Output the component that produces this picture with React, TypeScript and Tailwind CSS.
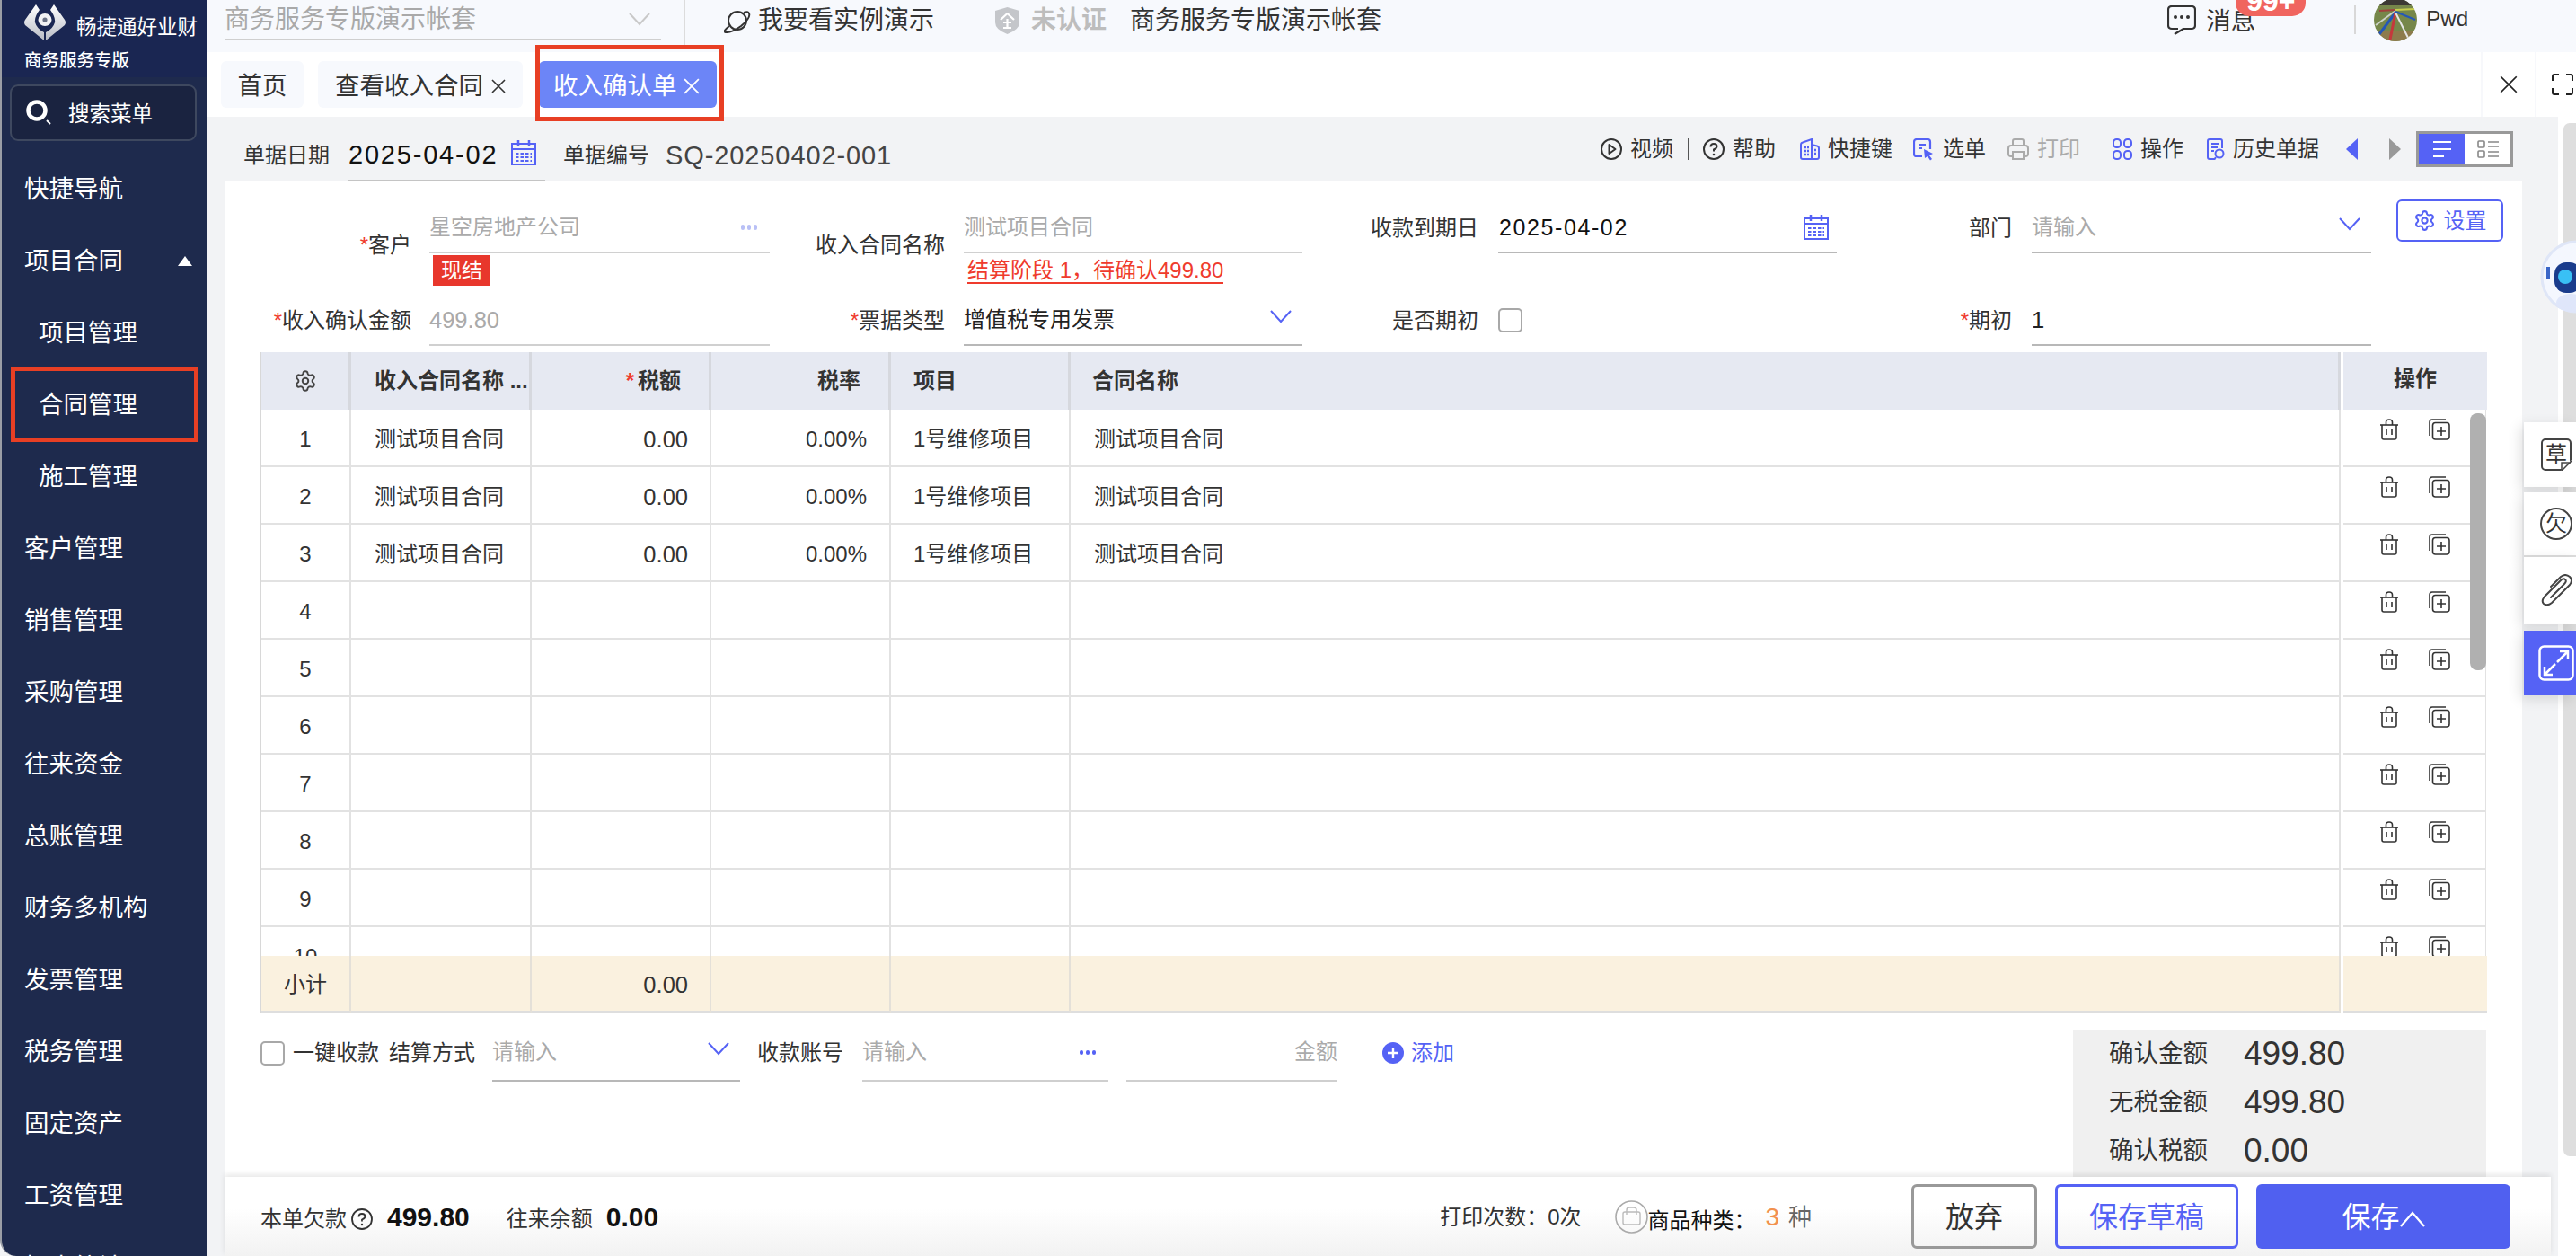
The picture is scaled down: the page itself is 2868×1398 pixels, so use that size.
import React from "react";
import { Settings } from "lucide-react";

const BLUE = "#5562f5";

function Chevron({ color = BLUE, className = "" }: { color?: string; className?: string }) {
  return (
    <svg width="24" height="15" viewBox="0 0 24 15" className={className} fill="none">
      <path d="M1 1 L12 13 L23 1" stroke={color} strokeWidth="2" />
    </svg>
  );
}

function Cross({ size = 16, color = "#333", sw = 1.6 }: { size?: number; color?: string; sw?: number }) {
  return (
    <svg width={size} height={size} viewBox="0 0 16 16" fill="none" className="shrink-0">
      <path d="M1 1 L15 15 M15 1 L1 15" stroke={color} strokeWidth={sw} />
    </svg>
  );
}

function Calendar() {
  return (
    <svg width="28" height="28" viewBox="0 0 28 28" fill="none" className="shrink-0">
      <rect x="1" y="4" width="26" height="23" stroke={BLUE} strokeWidth="2" />
      <path d="M1 10 H27" stroke={BLUE} strokeWidth="2" />
      <path d="M8 0 V7 M20 0 V7" stroke={BLUE} strokeWidth="2.5" />
      <path d="M5 15 H23 M5 19 H23 M5 23 H23" stroke={BLUE} strokeWidth="2" strokeDasharray="3.5 2" />
    </svg>
  );
}

function Logo() {
  return (
    <svg width="46" height="40" viewBox="0 0 46 40" className="shrink-0">
      <defs>
        <linearGradient id="lg" x1="0" y1="0" x2="0" y2="1">
          <stop offset="0" stopColor="#ffffff" />
          <stop offset="1" stopColor="#b9bcc6" />
        </linearGradient>
      </defs>
      <path d="M13 0 L1 17 Q-1 20 1 23 L22 40 L22 31 Q14 27 12 20 Q11 14 17 6 Z" fill="url(#lg)" />
      <path d="M33 0 L45 17 Q47 20 45 23 L24 40 L24 31 Q32 27 34 20 Q35 14 29 6 Z" fill="url(#lg)" />
      <ellipse cx="23" cy="17" rx="7.5" ry="7" fill="#f2f2f4" />
      <circle cx="23" cy="17" r="2.6" fill="#6b7285" />
    </svg>
  );
}

function SearchIcon() {
  return (
    <svg width="30" height="30" viewBox="0 0 30 30" fill="none" className="shrink-0">
      <circle cx="12" cy="12" r="9.5" stroke="#fff" strokeWidth="4.5" />
      <path d="M23 23 L27 27" stroke="#fff" strokeWidth="2" />
    </svg>
  );
}

function Avatar() {
  return (
    <svg width="48" height="48" viewBox="0 0 48 48" className="shrink-0 -mt-[2px]">
      <defs>
        <clipPath id="av">
          <circle cx="24" cy="24" r="24" />
        </clipPath>
      </defs>
      <g clipPath="url(#av)">
        <rect width="48" height="48" fill="#76874a" />
        <rect width="48" height="8" fill="#3d3a34" />
        <rect y="36" width="48" height="12" fill="#8d7b4c" />
        <path d="M24 14 L2 30" stroke="#ccd2c8" strokeWidth="2" />
        <path d="M24 16 L6 40" stroke="#2457b8" strokeWidth="3" />
        <path d="M24 16 L18 46" stroke="#c5383c" strokeWidth="3" />
        <path d="M24 16 L38 44" stroke="#e6e6e6" strokeWidth="2" />
        <path d="M24 15 L46 24" stroke="#2457b8" strokeWidth="2" />
        <path d="M24 13 L46 12" stroke="#c8cf4c" strokeWidth="2" />
        <path d="M24 13 L6 14" stroke="#a2413d" strokeWidth="2" />
      </g>
    </svg>
  );
}

function Robot() {
  return (
    <svg width="40" height="82" viewBox="0 0 40 82">
      <circle cx="41" cy="41" r="39" fill="#f4f7fe" stroke="#dfe6f7" strokeWidth="3" />
      <ellipse cx="34" cy="70" rx="16" ry="10" fill="#dfe6fa" />
      <rect x="16" y="25" width="30" height="34" rx="13" fill="#1a3c8c" />
      <circle cx="28" cy="41" r="8" fill="#39c0f5" />
      <path d="M9 30 L9 44" stroke="#3a66c8" strokeWidth="4" />
    </svg>
  );
}

const ToolIcons: Record<string, React.ReactNode> = {
  play: (
    <svg width="24" height="24" viewBox="0 0 24 24" fill="none">
      <circle cx="12" cy="12" r="11" stroke="#333" strokeWidth="2" />
      <path d="M9.5 7 L16.5 12 L9.5 17 Z" stroke="#333" strokeWidth="2" strokeLinejoin="round" />
    </svg>
  ),
  help: (
    <svg width="24" height="24" viewBox="0 0 24 24" fill="none">
      <circle cx="12" cy="12" r="11" stroke="#333" strokeWidth="2" />
      <path d="M8.5 9.5 Q8.5 6 12 6 Q15.5 6 15.5 9 Q15.5 11 12 12.5 V14.5" stroke="#333" strokeWidth="2" />
      <circle cx="12" cy="18" r="1.3" fill="#333" />
    </svg>
  ),
  building: (
    <svg width="22" height="24" viewBox="0 0 22 24" fill="none">
      <path d="M1 7 Q1 5 3 4.5 L13 1 V23 H3 Q1 23 1 21 Z" stroke={BLUE} strokeWidth="2" />
      <path d="M13 7 L19 8.5 Q21 9 21 11 V21 Q21 23 19 23 H13" stroke={BLUE} strokeWidth="2" />
      <path d="M5 10 H10 M5 14 H10 M5 18 H10 M16 13 H18 M16 17 H18" stroke={BLUE} strokeWidth="2.5" strokeDasharray="2 1" />
    </svg>
  ),
  select: (
    <svg width="24" height="25" viewBox="0 0 24 25" fill="none">
      <path d="M10 20 H4 Q1 20 1 17 V4 Q1 1 4 1 H16 Q19 1 19 4 V12" stroke={BLUE} strokeWidth="2.2" />
      <path d="M6 7 H14 M6 11 H10" stroke={BLUE} strokeWidth="2.2" />
      <path d="M12 12 L22 17 L18 19 L21 23 L19 24.5 L16 20 L13 22 Z" fill={BLUE} />
    </svg>
  ),
  print: (
    <svg width="24" height="24" viewBox="0 0 24 24" fill="none">
      <path d="M6 8 V3 Q6 1 8 1 H16 Q18 1 18 3 V8" stroke="#aaa" strokeWidth="2" />
      <path d="M6 20 H4 Q1 20 1 17 V11 Q1 8 4 8 H20 Q23 8 23 11 V17 Q23 20 20 20 H18" stroke="#aaa" strokeWidth="2" />
      <rect x="6" y="15" width="12" height="8" stroke="#aaa" strokeWidth="2" />
    </svg>
  ),
  ops: (
    <svg width="22" height="24" viewBox="0 0 22 24" fill="none">
      <rect x="1" y="1" width="8" height="9" rx="3.5" stroke={BLUE} strokeWidth="2" />
      <rect x="13" y="1" width="8" height="9" rx="3.5" stroke={BLUE} strokeWidth="2" />
      <rect x="1" y="14" width="8" height="9" rx="3.5" stroke={BLUE} strokeWidth="2" />
      <rect x="13" y="14" width="8" height="9" rx="3.5" stroke={BLUE} strokeWidth="2" />
    </svg>
  ),
  history: (
    <svg width="20" height="24" viewBox="0 0 20 24" fill="none">
      <path d="M9 23 H3 Q1 23 1 21 V3 Q1 1 3 1 H15 Q17 1 17 3 V11" stroke={BLUE} strokeWidth="2" />
      <path d="M5 6 H14 M5 10 H12 M5 14 H8" stroke={BLUE} strokeWidth="2" />
      <circle cx="14" cy="17" r="4.5" stroke={BLUE} strokeWidth="2" />
      <path d="M10 21 L8 24" stroke={BLUE} strokeWidth="2" />
    </svg>
  ),
};

function Tool({ icon, label, gray, className = "" }: { icon: string; label: string; gray?: boolean; className?: string }) {
  return (
    <div className={`flex items-center gap-[9px] ${className}`}>
      {ToolIcons[icon]}
      <span className={`text-[24px] leading-[28px] ${gray ? "text-[#aaa]" : "text-[#333]"}`}>{label}</span>
    </div>
  );
}

function Trash() {
  return (
    <svg width="20" height="24" viewBox="0 0 20 24" fill="none" className="shrink-0">
      <path d="M0 7 H20" stroke="#333" strokeWidth="1.6" />
      <path d="M6.5 7 V4 Q6.5 1 10 1 Q13.5 1 13.5 4 V7" stroke="#333" strokeWidth="1.6" />
      <path d="M2 7 V21 Q2 23 4 23 H16 Q18 23 18 21 V7" stroke="#333" strokeWidth="1.6" />
      <path d="M7 12 V18 M13 12 V18" stroke="#333" strokeWidth="1.6" />
    </svg>
  );
}

function CopyPlus() {
  return (
    <svg width="24" height="24" viewBox="0 0 24 24" fill="none" className="shrink-0">
      <path d="M19 1 H4 Q1 1 1 4 V19" stroke="#333" strokeWidth="1.6" />
      <rect x="4.5" y="4.5" width="18.5" height="18.5" rx="3" stroke="#333" strokeWidth="1.6" />
      <path d="M14 9 V19 M9 14 H19" stroke="#333" strokeWidth="1.6" />
    </svg>
  );
}

function Star({ className = "" }: { className?: string }) {
  return <span className={`text-[#ef3b2d] ${className}`}>*</span>;
}

function Underlined({
  w,
  line = "border-[#b8b8b8]",
  children,
}: {
  w: string;
  line?: string;
  children?: React.ReactNode;
}) {
  return (
    <div className={`h-[56px] flex items-center justify-between border-b-2 shrink-0 ${w} ${line}`}>{children}</div>
  );
}

function Label({ w, star, text, low }: { w: string; star?: boolean; text: string; low?: boolean }) {
  return (
    <div
      className={`h-[56px] flex items-center justify-end shrink-0 text-[24px] leading-[28px] text-[#333] ${w} ${low ? "pt-[37px]" : ""}`}
    >
      {star && <Star />}
      {text}
    </div>
  );
}

const NAV: { t: string; sub?: boolean; caret?: boolean; red?: boolean }[] = [
  { t: "快捷导航" },
  { t: "项目合同", caret: true },
  { t: "项目管理", sub: true },
  { t: "合同管理", sub: true, red: true },
  { t: "施工管理", sub: true },
  { t: "客户管理" },
  { t: "销售管理" },
  { t: "采购管理" },
  { t: "往来资金" },
  { t: "总账管理" },
  { t: "财务多机构" },
  { t: "发票管理" },
  { t: "税务管理" },
  { t: "固定资产" },
  { t: "工资管理" },
  { t: "报表统计" },
];

const COLS = ["w-[100px]", "w-[201px]", "w-[200px]", "w-[200px]", "w-[200px]", "w-[1414px]"];

function BodyRow({ n, filled }: { n: number; filled: boolean }) {
  const cell =
    "h-[64px] shrink-0 pt-[3px] border-b-2 border-r-2 border-[#e2e2e2] flex items-center text-[24px] leading-[28px] text-[#333]";
  return (
    <div className="flex">
      <div className={`${cell} ${COLS[0]} justify-center`}>{n}</div>
      <div className={`${cell} ${COLS[1]} pl-[26px]`}>{filled ? "测试项目合同" : ""}</div>
      <div className={`${cell} ${COLS[2]} justify-end pr-[24px] text-[25.5px]`}>{filled ? "0.00" : ""}</div>
      <div className={`${cell} ${COLS[3]} justify-end pr-[25px]`}>{filled ? "0.00%" : ""}</div>
      <div className={`${cell} ${COLS[4]} pl-[25px]`}>{filled ? "1号维修项目" : ""}</div>
      <div className={`${cell} ${COLS[5]} pl-[26px]`}>{filled ? "测试项目合同" : ""}</div>
      <div className="h-[64px] w-[160px] ml-[3px] shrink-0 border-b-2 border-r-2 border-[#e2e2e2] flex items-start pt-[10px] pl-[41px] gap-[34px]">
        <Trash />
        <CopyPlus />
      </div>
    </div>
  );
}

function HeaderCell({ w, className = "", children }: { w: string; className?: string; children?: React.ReactNode }) {
  return (
    <div
      className={`${w} h-[64px] shrink-0 bg-[#e6e9f2] border-r-[3px] border-[#d6d8de] flex items-center text-[24px] leading-[28px] font-semibold text-[#333] ${className}`}
    >
      {children}
    </div>
  );
}

export default function App() {
  return (
    <div className="w-[2868px] h-[1398px] flex overflow-hidden bg-[#f2f3f5] relative [font-family:'Liberation_Sans','Noto_Sans_CJK_SC',sans-serif]">
      {/* sidebar */}
      <aside className="w-[230px] h-[1398px] shrink-0 flex flex-col bg-[#1e2a4d] border-l-2 border-[#9a9da5] rounded-bl-[18px] overflow-hidden text-white">
        <div className="h-[86px] shrink-0 bg-[#1a2652] pl-[25px]">
          <div className="flex items-start gap-[12px] pt-[5px] h-[46px]">
            <Logo />
            <span className="text-[22.5px] leading-[24px] mt-[14px] whitespace-nowrap">畅捷通好业财</span>
          </div>
          <div className="text-[19.5px] leading-[24px] mt-[9px] font-medium">商务服务专版</div>
        </div>
        <div className="mt-[8px] ml-[9px] w-[208px] h-[63px] shrink-0 bg-[#1a2340] border-2 border-[#3e485f] rounded-[9px] flex items-center pl-[16px] gap-[17px]">
          <SearchIcon />
          <span className="text-[23.5px] leading-[28px] mt-[3px]">搜索菜单</span>
        </div>
        <nav className="mt-[13px] flex flex-col">
          {NAV.map((n) => (
            <div
              key={n.t}
              className={`h-[80px] shrink-0 flex items-center text-[27.5px] leading-[32px] ${n.sub ? "pl-[41px]" : "pl-[25px]"} ${n.caret ? "justify-between pr-[16px]" : ""}`}
            >
              {n.red ? (
                <div className="-ml-[31px] w-[209px] h-[84px] shrink-0 border-[5px] border-[#e83f24] flex items-center pl-[26px] pt-[2px]">
                  {n.t}
                </div>
              ) : (
                <span className="whitespace-nowrap mt-[2px]">{n.t}</span>
              )}
              {n.caret && (
                <svg width="16" height="11" viewBox="0 0 16 11" className="shrink-0">
                  <path d="M8 0 L16 11 H0 Z" fill="#fff" />
                </svg>
              )}
            </div>
          ))}
        </nav>
      </aside>

      {/* main */}
      <main className="flex-1 min-w-0 flex flex-col">
        {/* top bar */}
        <header className="h-[58px] shrink-0 bg-[#f7f9fd] flex items-start">
          <div className="ml-[20px] w-[486px] h-[45px] shrink-0 border-b-2 border-[#cfcfcf] flex items-center justify-between pr-[12px]">
            <span className="text-[28px] leading-[34px] text-[#a9a9a9]">商务服务专版演示帐套</span>
            <Chevron color="#c9c9c9" />
          </div>
          <div className="ml-[25px] w-[2px] h-[50px] bg-[#dcdcdc] shrink-0" />
          <div className="ml-[43px] h-[46px] flex items-center gap-[8px] shrink-0">
            <svg width="30" height="30" viewBox="0 0 30 30" fill="none" className="shrink-0">
              <circle cx="15" cy="15" r="10" stroke="#333" strokeWidth="2" />
              <path d="M6 21 Q-2 27 2 28 Q8 29 19 21 Q30 12 28 7 Q27 4 22 6" stroke="#333" strokeWidth="2" />
            </svg>
            <span className="text-[28px] leading-[34px] text-[#333]">我要看实例演示</span>
          </div>
          <div className="ml-[68px] h-[46px] flex items-center gap-[13px] shrink-0">
            <svg width="27" height="30" viewBox="0 0 27 30" fill="none" className="shrink-0">
              <path d="M13.5 0 L27 4 V17 Q27 25 13.5 30 Q0 25 0 17 V4 Z" fill="#c4c6ca" />
              <path d="M13.5 7 L6 14 M13.5 7 L21 14 M9 17 H18 M13.5 13 V23 M9 23 H18" stroke="#fff" strokeWidth="2.2" />
            </svg>
            <span className="text-[28px] leading-[34px] font-semibold text-[#bdbdbd]">未认证</span>
          </div>
          <div className="ml-[26px] h-[46px] flex items-center shrink-0">
            <span className="text-[28px] leading-[34px] text-[#333]">商务服务专版演示帐套</span>
          </div>
          <div className="ml-auto flex items-start shrink-0 pr-[120px]">
            <div className="relative flex items-center gap-[11px] h-[44px]">
              <svg width="32" height="33" viewBox="0 0 32 33" fill="none" className="shrink-0">
                <path d="M12 26 H5 Q1 26 1 22 V5 Q1 1 5 1 H27 Q31 1 31 5 V22 Q31 26 27 26 H18 L8 32" stroke="#333" strokeWidth="2.2" strokeLinejoin="round" />
                <circle cx="9" cy="13" r="2" fill="#333" />
                <circle cx="16" cy="13" r="2" fill="#333" />
                <circle cx="23" cy="13" r="2" fill="#333" />
              </svg>
              <span className="text-[27.5px] leading-[32px] text-[#333] mt-[3px]">消息</span>
              <div className="absolute left-[76px] -top-[16px] w-[78px] h-[34px] bg-[#f0655f] rounded-[15px] flex items-center justify-center text-white font-bold text-[32px] leading-[34px]">
                99+
              </div>
            </div>
            <div className="ml-[110px] mt-[6px] w-[2px] h-[32px] bg-[#d8d8d8]" />
            <div className="ml-[20px] flex items-center gap-[10px]">
              <Avatar />
              <span className="text-[24px] leading-[28px] text-[#333] -mt-[4px]">Pwd</span>
            </div>
          </div>
        </header>

        {/* tab bar */}
        <div className="h-[72px] shrink-0 bg-white flex items-start pl-[16px]">
          <div className="mt-[10px] w-[92px] h-[52px] pt-[3px] shrink-0 rounded-[6px] bg-[#f7f9fd] flex items-center justify-center text-[27.5px] leading-[32px] text-[#333]">
            首页
          </div>
          <div className="mt-[10px] ml-[16px] w-[228px] h-[52px] pt-[3px] shrink-0 rounded-[6px] bg-[#f7f9fd] flex items-center pl-[19px] gap-[9px] text-[27.5px] leading-[32px] text-[#333]">
            查看收入合同
            <Cross size={16} />
          </div>
          <div className="mt-[10px] ml-[18px] relative w-[198px] h-[52px] pt-[3px] shrink-0 rounded-[6px] bg-[#6c85f7] flex items-center pl-[16px] gap-[7px] text-[27.5px] leading-[32px] text-white">
            收入确认单
            <Cross size={18} color="#fff" />
            <div className="absolute -left-[4px] -top-[18px] w-[210px] h-[85px] border-[5px] border-[#e83f24] pointer-events-none" />
          </div>
          <div className="ml-auto flex self-stretch shrink-0">
            <div className="w-[60px] border-l-2 border-[#f7f8fb] flex items-center justify-center">
              <Cross size={20} color="#222" sw={1.4} />
            </div>
            <div className="w-[46px] border-l-2 border-[#f7f8fb] flex items-center pl-[17px]">
              <svg width="24" height="24" viewBox="0 0 24 24" fill="none">
                <path d="M1 8 V3 Q1 1 3 1 H8 M16 1 H21 Q23 1 23 3 V8 M23 16 V21 Q23 23 21 23 H16 M8 23 H3 Q1 23 1 21 V16" stroke="#222" strokeWidth="2" />
              </svg>
            </div>
          </div>
        </div>

        {/* content */}
        <div className="flex-1 min-h-0 flex">
          <div className="flex-1 min-w-0 flex flex-col pl-[20px]">
            {/* toolbar */}
            <div className="h-[72px] shrink-0 flex items-start text-[#333]">
              <span className="ml-[21px] mt-[29px] text-[24px] leading-[28px] whitespace-nowrap">单据日期</span>
              <div className="ml-[21px] w-[219px] h-[72px] shrink-0 border-b-2 border-[#c4c4c4] flex items-start pl-0 pt-[27px] gap-[15px]">
                <span className="text-[29px] leading-[30px] tracking-[1.8px] text-[#111] whitespace-nowrap">2025-04-02</span>
                <div className="-mt-[1px]">
                  <Calendar />
                </div>
              </div>
              <span className="ml-[20px] mt-[29px] text-[24px] leading-[28px] whitespace-nowrap">单据编号</span>
              <span className="ml-[18px] mt-[28px] text-[29px] leading-[30px] tracking-[0.9px] text-[#444] whitespace-nowrap">
                SQ-20250402-001
              </span>
              <div className="ml-auto h-[72px] flex items-center pr-[50px] shrink-0">
                <Tool icon="play" label="视频" />
                <div className="ml-[16px] w-[2px] h-[24px] bg-[#555]" />
                <Tool icon="help" label="帮助" className="ml-[15px]" />
                <Tool icon="building" label="快捷键" className="ml-[27px]" />
                <Tool icon="select" label="选单" className="ml-[23px]" />
                <Tool icon="print" label="打印" gray className="ml-[24px]" />
                <Tool icon="ops" label="操作" className="ml-[36px]" />
                <Tool icon="history" label="历史单据" className="ml-[26px]" />
                <svg width="13" height="24" viewBox="0 0 13 24" className="ml-[30px] shrink-0">
                  <path d="M13 0 V24 L0 12 Z" fill={BLUE} />
                </svg>
                <svg width="13" height="24" viewBox="0 0 13 24" className="ml-[35px] shrink-0">
                  <path d="M0 0 V24 L13 12 Z" fill="#999" />
                </svg>
                <div className="ml-[17px] w-[108px] h-[40px] border-[3px] border-[#999] flex shrink-0">
                  <div className="w-[51px] h-full bg-[#5562f5] flex items-center justify-center">
                    <svg width="20" height="18" viewBox="0 0 20 18" fill="none">
                      <path d="M0 1 H20 M0 9 H20 M0 17 H12" stroke="#fff" strokeWidth="2" />
                    </svg>
                  </div>
                  <div className="flex-1 h-full bg-white flex items-center justify-center">
                    <svg width="24" height="20" viewBox="0 0 24 20" fill="none">
                      <rect x="1" y="1" width="7" height="7" rx="1" stroke="#888" strokeWidth="1.6" />
                      <rect x="1" y="12" width="7" height="7" rx="1" stroke="#888" strokeWidth="1.6" />
                      <path d="M12 2 H24 M12 7 H24 M12 13 H24 M12 18 H24" stroke="#888" strokeWidth="1.6" />
                    </svg>
                  </div>
                </div>
              </div>
            </div>

            {/* panel */}
            <div className="flex-1 min-h-0 mr-[40px] bg-white pt-[24px] overflow-hidden">
              {/* row 1 */}
              <div className="flex items-start h-[103px]">
                <Label w="w-[208px]" star text="客户" low />
                <div className="ml-[20px] shrink-0">
                  <Underlined w="w-[379px]" line="border-[#d0d0d0]">
                    <span className="text-[24px] leading-[28px] text-[#aaa]">星空房地产公司</span>
                    <span className="mr-[14px] flex gap-[3px]">
                      <i className="w-[4px] h-[6px] rounded-full bg-[#b9c0f6]" />
                      <i className="w-[4px] h-[6px] rounded-full bg-[#b9c0f6]" />
                      <i className="w-[4px] h-[6px] rounded-full bg-[#b9c0f6]" />
                    </span>
                  </Underlined>
                  <div className="ml-[4px] mt-[2px] w-[64px] h-[34px] bg-[#e8372c] text-white text-[23px] leading-[34px] text-center">
                    现结
                  </div>
                </div>
                <Label w="w-[195px]" text="收入合同名称" low />
                <div className="ml-[21px] shrink-0">
                  <Underlined w="w-[377px]" line="border-[#d0d0d0]">
                    <span className="text-[24px] leading-[28px] text-[#aaa]">测试项目合同</span>
                  </Underlined>
                  <div className="ml-[4px] mt-[6px] w-fit text-[24px] leading-[26px] text-[#ef3b2d] border-b-2 border-[#ef3b2d] whitespace-nowrap">
                    {"结算阶段 1\uFF0C待确认499.80"}
                  </div>
                </div>
                <Label w="w-[196px]" text="收款到期日" />
                <div className="ml-[22px] shrink-0">
                  <Underlined w="w-[377px]">
                    <span className="text-[25px] leading-[28px] tracking-[1.6px] text-[#111] ml-[1px]">2025-04-02</span>
                    <div className="mr-[9px]">
                      <Calendar />
                    </div>
                  </Underlined>
                </div>
                <Label w="w-[195px]" text="部门" />
                <div className="ml-[22px] shrink-0">
                  <Underlined w="w-[378px]">
                    <span className="text-[24px] leading-[28px] text-[#aaa]">请输入</span>
                    <Chevron className="mr-[12px] -mt-[8px]" />
                  </Underlined>
                </div>
                <div className="ml-[28px] -mt-[4px] w-[119px] h-[47px] shrink-0 border-2 border-[#5562f5] rounded-[6px] flex items-center justify-center gap-[9px] text-[#5562f5] text-[24px] leading-[28px]">
                  <Settings size={25} strokeWidth={2} color={BLUE} />
                  设置
                </div>
              </div>

              {/* row 2 */}
              <div className="flex items-start h-[56px]">
                <Label w="w-[208px]" star text="收入确认金额" />
                <div className="ml-[20px]">
                  <Underlined w="w-[379px]" line="border-[#d0d0d0]">
                    <span className="text-[25.5px] leading-[28px] text-[#aaa]">499.80</span>
                  </Underlined>
                </div>
                <Label w="w-[195px]" star text="票据类型" />
                <div className="ml-[21px]">
                  <Underlined w="w-[377px]">
                    <span className="text-[24px] leading-[28px] text-[#222]">增值税专用发票</span>
                    <Chevron className="mr-[12px] -mt-[8px]" />
                  </Underlined>
                </div>
                <Label w="w-[196px]" text="是否期初" />
                <div className="ml-[22px] h-[54px] w-[377px] shrink-0 flex items-center">
                  <div className="w-[27px] h-[27px] border-2 border-[#a8a8a8] rounded-[5px]" />
                </div>
                <Label w="w-[195px]" star text="期初" />
                <div className="ml-[22px]">
                  <Underlined w="w-[378px]">
                    <span className="text-[25.5px] leading-[28px] text-[#222]">1</span>
                  </Underlined>
                </div>
              </div>

              {/* table */}
              <div className="mt-[7px] ml-[40px] w-[2478px] border-l border-[#d8d8d8] relative">
                <div className="flex bg-white">
                  <HeaderCell w={COLS[0]} className="justify-center">
                    <Settings size={26} strokeWidth={1.8} color="#444" />
                  </HeaderCell>
                  <HeaderCell w={COLS[1]} className="pl-[26px] whitespace-nowrap">收入合同名称 ...</HeaderCell>
                  <HeaderCell w={COLS[2]} className="justify-end pr-[31px]">
                    <Star className="mr-[4px]" />
                    税额
                  </HeaderCell>
                  <HeaderCell w={COLS[3]} className="justify-end pr-[31px]">税率</HeaderCell>
                  <HeaderCell w={COLS[4]} className="pl-[25px]">项目</HeaderCell>
                  <HeaderCell w={COLS[5]} className="pl-[24px]">合同名称</HeaderCell>
                  <div className="w-[160px] ml-[3px] h-[64px] shrink-0 bg-[#e6e9f2] flex items-center justify-center pb-[4px] text-[24px] leading-[28px] font-semibold text-[#333]">
                    操作
                  </div>
                </div>
                <div className="h-[608px] overflow-hidden relative">
                  {[1, 2, 3, 4, 5, 6, 7, 8, 9, 10].map((n) => (
                    <BodyRow key={n} n={n} filled={n <= 3} />
                  ))}
                  <div className="absolute right-0 top-[4px] w-[18px] h-[286px] bg-[#b0b0b0] rounded-[8px]" />
                </div>
                <div className="flex">
                  {COLS.map((c, i) => (
                    <div
                      key={c + i}
                      className={`${c} h-[64px] pt-[3px] shrink-0 bg-[#faf1df] border-b-[3px] border-b-[#dedede] border-r-2 border-r-[#e4e0d8] flex items-center text-[24px] leading-[28px] text-[#333] ${i === 0 ? "justify-center" : ""} ${i === 2 ? "justify-end pr-[24px] text-[25.5px]" : ""}`}
                    >
                      {i === 0 ? "小计" : i === 2 ? "0.00" : ""}
                    </div>
                  ))}
                  <div className="w-[160px] ml-[3px] h-[64px] shrink-0 bg-[#faf1df] border-b-[3px] border-[#dedede]" />
                </div>
              </div>

              {/* bottom form */}
              <div className="mt-[18px] ml-[40px] w-[2478px] flex justify-between items-start">
                <div className="flex items-start h-[58px]">
                  <div className="h-[58px] flex items-center pb-[6px] shrink-0">
                    <div className="w-[27px] h-[27px] border-2 border-[#a8a8a8] rounded-[5px]" />
                    <span className="ml-[9px] text-[24px] leading-[28px] text-[#333]">一键收款</span>
                    <span className="ml-[11px] text-[24px] leading-[28px] text-[#333]">结算方式</span>
                  </div>
                  <div className="ml-[19px] w-[276px] h-[58px] shrink-0 border-b-2 border-[#b8b8b8] flex items-center justify-between pb-[6px]">
                    <span className="text-[24px] leading-[28px] text-[#aaa]">请输入</span>
                    <Chevron className="mr-[12px] -mt-[8px]" />
                  </div>
                  <div className="ml-[19px] h-[58px] flex items-center pb-[6px] text-[24px] leading-[28px] text-[#333] shrink-0">
                    收款账号
                  </div>
                  <div className="ml-[21px] w-[274px] h-[58px] shrink-0 border-b-2 border-[#cfcfcf] flex items-center justify-between pb-[6px]">
                    <span className="text-[24px] leading-[28px] text-[#aaa]">请输入</span>
                    <span className="mr-[14px] flex gap-[3px]">
                      <i className="w-[4px] h-[5px] rounded-full bg-[#5562f5]" />
                      <i className="w-[4px] h-[5px] rounded-full bg-[#5562f5]" />
                      <i className="w-[4px] h-[5px] rounded-full bg-[#5562f5]" />
                    </span>
                  </div>
                  <div className="ml-[20px] w-[235px] h-[58px] shrink-0 border-b-2 border-[#cfcfcf] flex items-center justify-end pb-[6px] text-[24px] leading-[28px] text-[#aaa]">
                    金额
                  </div>
                  <div className="ml-[50px] h-[58px] flex items-center pb-[6px] gap-[8px] text-[24px] leading-[28px] text-[#5562f5] shrink-0">
                    <svg width="24" height="24" viewBox="0 0 24 24">
                      <circle cx="12" cy="12" r="12" fill={BLUE} />
                      <path d="M12 6 V18 M6 12 H18" stroke="#fff" strokeWidth="2.4" />
                    </svg>
                    添加
                  </div>
                </div>
                <div className="w-[460px] h-[164px] shrink-0 bg-[#f0f0f0] pl-[40px] text-[#333]">
                  {[
                    ["确认金额", "499.80"],
                    ["无税金额", "499.80"],
                    ["确认税额", "0.00"],
                  ].map(([l, v]) => (
                    <div key={l} className="h-[54px] flex items-center">
                      <span className="w-[150px] shrink-0 text-[27.5px] leading-[32px]">{l}</span>
                      <span className="text-[37px] leading-[40px]">{v}</span>
                    </div>
                  ))}
                </div>
              </div>
            </div>

            {/* bottom bar */}
            <div className="h-[88px] shrink-0 mr-[8px] bg-gradient-to-b from-white from-40% to-[#f2f2f2] shadow-[0_-3px_6px_rgba(0,0,0,0.09)] flex items-center pl-[40px] pr-[45px] relative">
              <span className="text-[24px] leading-[28px] text-[#333] mt-[5px]">本单欠款</span>
              <svg width="24" height="24" viewBox="0 0 24 24" fill="none" className="ml-[5px] mt-[6px] shrink-0">
                <circle cx="12" cy="12" r="11" stroke="#333" strokeWidth="1.8" />
                <path d="M8.5 9.5 Q8.5 6 12 6 Q15.5 6 15.5 9 Q15.5 11 12 12.5 V14.5" stroke="#333" strokeWidth="1.8" />
                <circle cx="12" cy="18" r="1.2" fill="#333" />
              </svg>
              <span className="ml-[16px] text-[30px] leading-[34px] font-bold text-[#111] mt-[1px]">499.80</span>
              <span className="ml-[41px] text-[24px] leading-[28px] text-[#333] mt-[5px]">往来余额</span>
              <span className="ml-[15px] text-[30px] leading-[34px] font-bold text-[#111] mt-[1px]">0.00</span>
              <span className="ml-[870px] text-[24px] leading-[28px] text-[#333] whitespace-nowrap mt-[1px]">{"打印次数\uFF1A0次"}</span>
              <svg width="37" height="37" viewBox="0 0 37 37" fill="none" className="ml-[37px] shrink-0">
                <circle cx="18.5" cy="18.5" r="17.5" stroke="#aaa" strokeWidth="1.6" />
                <path d="M9 15 Q9 13 11 13 H26 Q28 13 28 15 V25 Q28 27 26 27 H11 Q9 27 9 25 Z" stroke="#bbb" strokeWidth="1.4" />
                <path d="M13 16 V11 Q13 8 16 8 H21 Q24 8 24 11 V16" stroke="#bbb" strokeWidth="1.4" />
              </svg>
              <span className="text-[24px] leading-[28px] text-[#111] whitespace-nowrap mt-[10px]">{"商品种类\uFF1A"}</span>
              <span className="ml-[11px] text-[28px] leading-[30px] text-[#f2914e] mt-[2px]">3</span>
              <span className="ml-[10px] text-[26px] leading-[30px] text-[#666] mt-[2px]">种</span>
              <div className="ml-auto flex items-center gap-[20px] shrink-0">
                <div className="w-[140px] h-[72px] pt-[2px] border-[3px] border-[#999] rounded-[6px] flex items-center justify-center text-[32px] leading-[36px] text-[#333]">
                  放弃
                </div>
                <div className="w-[204px] h-[72px] pt-[2px] border-[3px] border-[#5562f5] rounded-[6px] flex items-center justify-center text-[32px] leading-[36px] text-[#5562f5]">
                  保存草稿
                </div>
                <div className="w-[283px] h-[72px] pt-[2px] bg-[#5060f0] rounded-[6px] flex items-center justify-center text-[32px] leading-[36px] text-white">
                  保存
                  <svg width="28" height="18" viewBox="0 0 28 18" fill="none" className="mt-[4px]">
                    <path d="M1 17 L14 2 L27 17" stroke="#fff" strokeWidth="2.2" />
                  </svg>
                </div>
              </div>
            </div>
          </div>

          {/* right scroll strip */}
          <div className="w-[20px] shrink-0 bg-white pl-[6px] pt-[7px]">
            <div className="w-[14px] h-[1150px] bg-[#dedede] rounded-l-[7px]" />
          </div>
        </div>
      </main>

      {/* floating helpers */}
      <div className="absolute right-0 top-[267px]">
        <Robot />
      </div>
      <div className="absolute right-0 top-[470px] w-[58px] flex flex-col">
        <div className="h-[72px] bg-white shadow-[-4px_4px_14px_rgba(0,0,0,0.12)] flex items-center pl-[19px]">
          <div className="relative w-[34px] h-[36px] border-2 border-[#444] rounded-[5px] flex items-center justify-center text-[24px] leading-[26px] text-[#333]">
            草
            <svg width="12" height="12" viewBox="0 0 12 12" className="absolute -right-[2px] -bottom-[2px]">
              <path d="M12 0 L0 12 H12 Z" fill="#fff" />
              <path d="M12 1 L1 12 M1 12 V3 H11" fill="none" stroke="#444" strokeWidth="1.5" />
            </svg>
          </div>
        </div>
        <div className="mt-[6px] h-[72px] bg-white border-b-2 border-[#ddd] shadow-[-4px_4px_14px_rgba(0,0,0,0.12)] flex items-center pl-[18px]">
          <div className="w-[36px] h-[36px] border-2 border-[#444] rounded-full flex items-center justify-center text-[24px] leading-[26px] text-[#333]">
            欠
          </div>
        </div>
        <div className="h-[74px] bg-white shadow-[-4px_4px_14px_rgba(0,0,0,0.12)] flex items-center pl-[18px]">
          <svg width="36" height="36" viewBox="0 0 36 36" fill="none">
            <path d="M12 26 L27 11 Q30 8 28 6 Q26 4 23 7 L5 25 Q1 30 4 33 Q8 36 13 32 L33 12 Q37 7 33 3 Q28 -1 23 3 L12 14" stroke="#444" strokeWidth="2" strokeLinecap="round" />
          </svg>
        </div>
        <div className="mt-[8px] h-[72px] bg-[#5562f5] shadow-[-4px_4px_14px_rgba(0,0,0,0.12)] flex items-center pl-[16px]">
          <svg width="40" height="40" viewBox="0 0 40 40" fill="none">
            <rect x="1.5" y="1.5" width="37" height="37" rx="5" stroke="#fff" strokeWidth="2.5" />
            <path d="M21 19 L33 7 M24 7 H33 V16 M19 21 L7 33 M7 24 V33 H16" stroke="#fff" strokeWidth="2.5" />
          </svg>
        </div>
      </div>
    </div>
  );
}
